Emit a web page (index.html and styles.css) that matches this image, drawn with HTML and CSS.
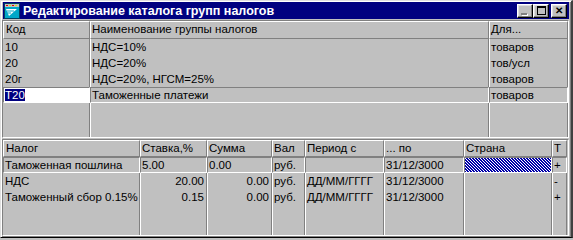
FILE: index.html
```html
<!DOCTYPE html>
<html lang="ru">
<head>
    <meta charset="UTF-8">
    <title>Редактирование каталога групп налогов</title>
    <link rel="stylesheet" href="styles.css">
</head>
<body>
    <div class="window">
        <div class="titlebar">
            <svg class="app-icon" width="16" height="16" viewBox="0 0 16 16">
                <rect x="0.5" y="0.5" width="15" height="15" fill="#00a8c8" stroke="#004060"/>
                <rect x="1" y="1" width="14" height="3" fill="#c0c0c0"/>
                <rect x="2" y="2" width="2" height="1" fill="#e00000"/>
                <rect x="5" y="2" width="2" height="1" fill="#e0e000"/>
                <rect x="8" y="2" width="2" height="1" fill="#e00000"/>
                <rect x="11" y="2" width="2" height="1" fill="#e0e000"/>
                <path d="M2 6 L13 6 L5 13 Z" fill="#ffffff"/>
                <path d="M3 8 L10 8 M3 10 L7 10" stroke="#00a8c8" stroke-width="1"/>
            </svg>
            <span class="title">Редактирование каталога групп налогов</span>
            <div class="buttons">
                <span class="tbtn disabled"><i class="min"></i></span>
                <span class="tbtn"><i class="max"></i></span>
                <span class="tbtn close">✕</span>
            </div>
        </div>

        <div class="grid top-grid">
            <div class="cell head c1">Код</div>
            <div class="cell head">Наименование группы налогов</div>
            <div class="cell head">Для...</div>

            <div class="cell c1">10</div>
            <div class="cell">НДС=10%</div>
            <div class="cell">товаров</div>

            <div class="cell c1">20</div>
            <div class="cell">НДС=20%</div>
            <div class="cell">тов/усл</div>

            <div class="cell c1">20г</div>
            <div class="cell">НДС=20%, НГСМ=25%</div>
            <div class="cell">товаров</div>

            <div class="cell c1 cur editor"><span class="sel">Т20</span></div>
            <div class="cell cur">Таможенные платежи</div>
            <div class="cell cur">товаров</div>

            <div class="cell c1"></div>
            <div class="cell"></div>
            <div class="cell"></div>
        </div>

        <div class="grid bottom-grid">
            <div class="cell head c1">Налог</div>
            <div class="cell head">Ставка,%</div>
            <div class="cell head">Сумма</div>
            <div class="cell head">Вал</div>
            <div class="cell head">Период с</div>
            <div class="cell head">... по</div>
            <div class="cell head">Страна</div>
            <div class="cell head">Т</div>

            <div class="cell c1 cur">Таможенная пошлина</div>
            <div class="cell cur">5.00</div>
            <div class="cell cur">0.00</div>
            <div class="cell cur">руб.</div>
            <div class="cell cur"></div>
            <div class="cell cur">31/12/3000</div>
            <div class="cell cur hatch"></div>
            <div class="cell cur">+</div>

            <div class="cell c1">НДС</div>
            <div class="cell num">20.00</div>
            <div class="cell num">0.00</div>
            <div class="cell">руб.</div>
            <div class="cell">ДД/ММ/ГГГГ</div>
            <div class="cell">31/12/3000</div>
            <div class="cell"></div>
            <div class="cell">-</div>

            <div class="cell c1">Таможенный сбор 0.15%</div>
            <div class="cell num">0.15</div>
            <div class="cell num">0.00</div>
            <div class="cell">руб.</div>
            <div class="cell">ДД/ММ/ГГГГ</div>
            <div class="cell">31/12/3000</div>
            <div class="cell"></div>
            <div class="cell">+</div>

            <div class="cell c1"></div>
            <div class="cell"></div>
            <div class="cell"></div>
            <div class="cell"></div>
            <div class="cell"></div>
            <div class="cell"></div>
            <div class="cell"></div>
            <div class="cell"></div>
        </div>
    </div>
</body>
</html>
```

FILE: styles.css
```css
body {
    margin: 0;
    background-color: #c0c0c0;
    font-family: "Liberation Sans", Arial, sans-serif;
    font-size: 11.5px;
    color: #000;
}
.window {
    width: 573px;
    height: 238px;
    box-sizing: border-box;
    background-color: #c0c0c0;
    border-style: solid;
    border-width: 1px 2px 1px 1px;
    border-color: #dfdfdf #404040 #000 #dfdfdf;
    box-shadow: inset 1px 1px #fff, inset -1px -1px #808080;
    padding: 1px 2px 1px 1px;
}
.titlebar {
    height: 17px;
    margin: 0 0 1px 1px;
    background-color: #000080;
    display: flex;
    align-items: center;
    padding: 0 2px 0 1px;
}
.app-icon {
    flex: none;
    margin-right: 3px;
}
.title {
    color: #fff;
    font-weight: bold;
    font-size: 12.5px;
    white-space: nowrap;
}
.buttons {
    margin-left: auto;
    display: flex;
}
.tbtn {
    width: 16px;
    height: 14px;
    box-sizing: border-box;
    background-color: #c0c0c0;
    border: 1px solid;
    border-color: #fff #000 #000 #fff;
    box-shadow: inset -1px -1px #808080, inset 1px 1px #dfdfdf;
    display: flex;
    align-items: center;
    justify-content: center;
    position: relative;
}
.tbtn.close {
    margin-left: 2px;
    font-size: 10px;
    font-weight: bold;
    line-height: 1;
}
.min {
    position: absolute;
    left: 3px;
    bottom: 2px;
    width: 6px;
    height: 2px;
    background-color: #808080;
    box-shadow: 1px 1px #fff;
}
.max {
    width: 9px;
    height: 9px;
    box-sizing: border-box;
    border: 1px solid #000;
    border-top-width: 2px;
}
.grid {
    display: grid;
    box-sizing: border-box;
    border-style: solid;
    border-width: 1px;
    border-color: #808080 #fff #fff #808080;
}
.top-grid {
    height: 118px;
    grid-template-columns: 87px 399px 79px;
    grid-template-rows: 18px repeat(4, 16px) 1fr;
}
.bottom-grid {
    margin-top: 1px;
    height: 97px;
    grid-template-columns: 137px 67px 65px 33px 79px 80px 88px 15px;
    grid-template-rows: 17px repeat(3, 16px) 1fr;
}
.cell {
    box-sizing: border-box;
    border-left: 1px solid #fff;
    border-right: 1px solid #808080;
    padding: 0 2px 0 1px;
    line-height: 16px;
    white-space: nowrap;
    overflow: hidden;
}
.cell.c1 {
    border-left: none;
    padding-left: 2px;
}
.cell.head {
    border-top: 1px solid #fff;
    border-left: 1px solid #fff;
    border-bottom: 1px solid #808080;
    line-height: 15px;
}
.cell.cur {
    border-style: solid;
    border-width: 1px;
    border-color: #808080 #fff #fff #808080;
    line-height: 14px;
}
.cell.c1.cur {
    padding-left: 1px;
}
.editor {
    background-color: #fff;
}
.sel {
    background-color: #000080;
    color: #fff;
}
.num {
    text-align: right;
}
.hatch {
    background: repeating-linear-gradient(45deg, #0000a8 0 1.4px, #fff 1.4px 2.12px);
}
```
